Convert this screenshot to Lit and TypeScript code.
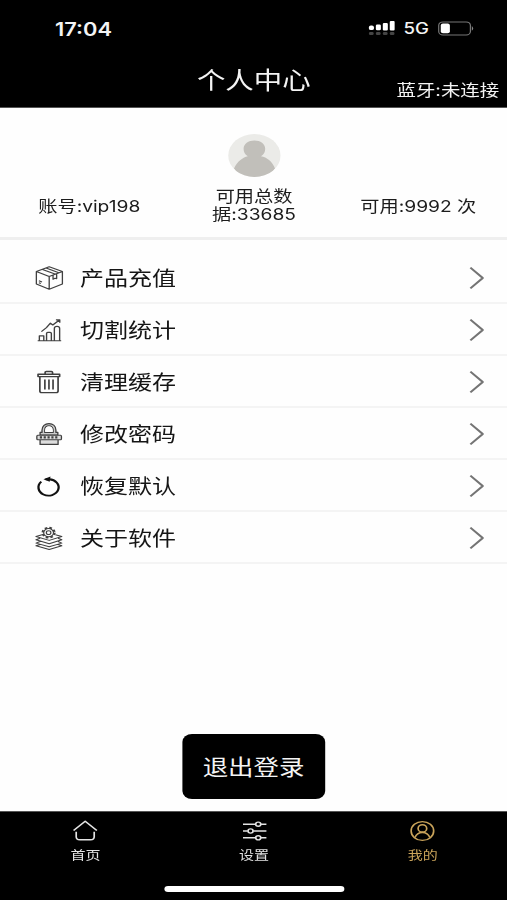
import { LitElement, html, css, svg } from "lit";
import { customElement, property } from "lit/decorators.js";

const icons: Record<string, unknown> = {
  box: svg`<path stroke-width="1.1" d="M12 .8 23 5.6V18L12 23.2 1.3 18V5.6ZM1.3 5.6 12 10.6 23 5.6M12 10.6V23.2M6.4 3.4 17.4 8.2M9.4 2 20 6.8M15.2 9.2V13.2L16.8 12.2 18.2 12.6V8M3.4 14.8l2.6 1.1M3.4 16.8l1.6.7"/>`,
  chart: svg`<path stroke-width="1.15" d="M2.4 22.7H22M3.8 22.5v-4.7h3.7v4.7M9.8 22.5V15.4q0-1 1-1h2q1 0 1 1v7.1M16.3 22.5V10.4q0-2 2.2-2t2.2 2v12.1M5.5 13.6 9.7 9.6 13 5.2 15 7 20.5 2M17.6 1.8h3.2v3"/>`,
  trash: svg`<path stroke-width="1.4" d="M2.7 4.3H20.7V6.6H2.7ZM8.6 4V2.4q0-.9 1-.9h4.2q1 0 1 .9V4M4.2 6.8V21q0 1.6 1.6 1.6H17.8q1.6 0 1.6-1.6V6.8M8.4 9.6v10M11.8 9.6v10M15.2 9.6v10"/>`,
  lock: svg`<path stroke-width="1.1" fill="#ccc" d="M4.4 13V10.4H6V8.2C6 4 8.5 1.6 11.8 1.6S17.6 4 17.6 8.2v2.2h1.6V13ZM8.3 10.4h7V8.2c0-2.8-1.4-4.3-3.5-4.3S8.3 5.4 8.3 8.2Z"/><path fill="#fff" stroke="none" d="M8.6 10H15V8.2c0-2.6-1.3-3.9-3.2-3.9S8.6 5.6 8.6 8.2Z"/><path fill="#ddd" stroke-width="1.1" d="M4.4 17.8v4.6H19.4v-4.6M2.4 13.2H21.5q.7 0 .7 1.2v2q0 1.3-.7 1.3H2.4q-.7 0-.7-1.3v-2q0-1.2.7-1.2Z"/><path stroke-width="2.2" stroke-dasharray="1.8 1.4" d="M4.2 15.4H20"/>`,
  reset: svg`<path stroke="#111" stroke-width="1.9" d="M5.4 7.7A8.4 8.2 0 1 0 12 5.2H9"/><path fill="#111" stroke="none" d="M7.2 5.3 13.1 2.6 12.4 7.8Z"/>`,
  about: svg`<path d="M6 8.8 1 10.5 12 14.4 22.5 10.5 17.2 8.8M4.4 12.2 1 13.8 12 17.8 22.5 13.8 19.4 12.2M4.4 15.5 1 17.1 12 20.8 22.5 17.1 19.4 15.5M4.4 18.5 1 19.8 12 23.5 22.5 19.8 19.4 18.5"/><circle cx="11.5" cy="6.7" r="4.1"/><circle cx="11.5" cy="6.7" r="1.9"/><circle cx="11.5" cy="6.7" r="5" stroke-width="1.8" stroke-dasharray="2.2 1.73"/>`,
  home: svg`<path d="m2.3 11.6 9.7-9.4 9.7 9.4M4.5 12.8v5q0 3 3 3h9q3 0 3-3v-5"/>`,
  sliders: svg`<path d="M2.5 5.2h10.4M17.5 5.2H22M2.5 12h4M11.2 12H22M2.5 18.8h10.4M17.5 18.8H22"/><circle cx="15.2" cy="5.2" r="2.1"/><circle cx="8.8" cy="12" r="2.1"/><circle cx="15.2" cy="18.8" r="2.1"/>`,
  user: svg`<circle cx="12" cy="12" r="9.4"/><circle cx="12" cy="9.4" r="3.6"/><path d="M5.8 18.6C6.8 15.4 9 13.5 12 13.5s5.2 1.9 6.2 5.1"/>`,
  chevron: svg`<path d="m7 1.7 10.3 10.3L7 22.3"/>`,
};

@customElement("line-icon")
class LineIcon extends LitElement {
  @property() name = "";
  static styles = css`
    :host { display: block; width: 24px; height: 24px; flex: none; }
    svg {
      display: block; width: 100%; height: 100%; overflow: visible; fill: none;
      stroke: currentColor; stroke-width: var(--line, 1);
      stroke-linejoin: round;
    }
  `;
  render() {
    return html`<svg viewBox="0 0 24 24">${icons[this.name]}</svg>`;
  }
}

@customElement("app-root")
class AppRoot extends LitElement {
  static styles = css`
    :host {
      display: block; width: 507px; height: 900px; overflow: hidden; background: #fefefe;
      font-family: Inter, "Noto Sans CJK SC", sans-serif; color: #1c1c1c;
    }
    * { box-sizing: border-box; }
    /* The whole screen is 20% wider than its natural proportions. */
    .screen {
      width: 422.5px; height: 900px; display: flex; flex-direction: column;
      transform: scaleX(1.2); transform-origin: 0 0;
    }
    .top { height: 108px; background: #000; color: #f4f4f4; border-bottom: 1px solid #555; flex: none; }
    .status { height: 57px; display: flex; align-items: center; padding: 0 28px 0 45.8px; }
    .time { font-size: 18.2px; font-weight: 600; flex: 1; }
    .signal { width: 22px; height: 15px; margin-right: 7px; }
    .net { font-size: 15.5px; font-weight: 500; margin-right: 7px; }
    .battery { width: 30px; height: 15px; }
    .titles { height: 48px; display: grid; grid-template-columns: 1fr auto 1fr; align-items: center; padding: 0 6.5px 0 7px; }
    .title { grid-column: 2; font-size: 23.7px; font-weight: 400; line-height: 30px; margin: 0; }
    .bt { font-size: 16.2px; line-height: 20px; text-align: right; padding-top: 18px; font-feature-settings: "calt" 0; }
    .account {
      height: 132px; display: grid; grid-template-columns: 1fr 1fr 1fr; flex: none; font-feature-settings: "calt" 0;
      border-bottom: 3px solid #efefef; font-size: 16px; line-height: 18.5px; text-align: center;
    }
    .side { padding-top: 89px; white-space: nowrap; }
    .left { padding-left: 8px; }
    .right { padding-right: 7px; }
    .mid { display: flex; flex-direction: column; align-items: center; padding: 26px 0 0 1px; }
    .avatar { width: 44px; height: 43px; margin-bottom: 9.5px; display: block; }
    .list { padding-top: 12px; flex: 1; }
    .row {
      height: 52px; display: flex; align-items: center; padding: 2px 12.8px 0 28.9px;
      border-bottom: 2px solid #f4f4f4; color: #404040;
    }
    .label { flex: 1; margin: -1px 0 1px 13.7px; font-size: 20px; color: #151515; }
    .go { --line: 1.8; color: #747474; width: 26px; }
    .exit {
      width: 119.5px; height: 65px; border-radius: 8px; border: 0; background: #000; color: #f4f4f4;
      font: inherit; font-size: 21.2px; align-self: center; margin-bottom: 12px; flex: none; padding: 0 0 2px;
    }
    .bottom { height: 89px; background: #000; border-top: 1px solid #555; flex: none; }
    .tabs { display: grid; grid-template-columns: 1fr 1fr 1fr; height: 74px; padding: 7px 0 0 1px; }
    .tab { display: flex; flex-direction: column; align-items: center; font-size: 12.5px; line-height: 18px; gap: 4px; color: #e4e4e4; }
    .tab line-icon { --line: 1.4; }
    .tabs .active { color: #c9a35a; }
    .indicator { width: 150.5px; height: 6px; border-radius: 3px; background: #fff; margin: 0 0 0 136.6px; }
  `;

  private rows = [
    ["box", "产品充值"],
    ["chart", "切割统计"],
    ["trash", "清理缓存"],
    ["lock", "修改密码"],
    ["reset", "恢复默认"],
    ["about", "关于软件"],
  ];

  private tabs = [
    ["home", "首页"],
    ["sliders", "设置"],
    ["user", "我的"],
  ];

  render() {
    return html`<div class="screen">
      <header class="top">
        <div class="status">
          <span class="time">17:04</span>
          <svg class="signal" viewBox="0 0 22 15">
            <g fill="#fff">
              <rect x="0.4" y="4.6" width="4.2" height="4.4" rx="1.6" /><rect x="6.2" y="3.6" width="4.2" height="5.6" rx="1.2" />
              <rect x="12" y="2" width="4.2" height="7.4" rx="1" /><rect x="17.8" y="0" width="4.2" height="9.4" rx="1" />
            </g>
            <g fill="#444">
              <rect x="0.4" y="11" width="4" height="3" rx="1.2" /><rect x="6.2" y="11" width="4" height="3" rx="1.2" />
              <rect x="12" y="11" width="4" height="3" rx="1.2" /><rect x="17.8" y="11" width="4" height="3" rx="1.2" />
            </g>
          </svg>
          <span class="net">5G</span>
          <svg class="battery" viewBox="0 0 30 15">
            <rect x=".6" y=".9" width="26.4" height="13" rx="3.5" fill="none" stroke="#777" />
            <rect x="2.3" y="2.6" width="7.6" height="9.6" rx="1.8" fill="#fff" />
            <path d="M28.2 5q2.2 2.4 0 4.8z" fill="#888" />
          </svg>
        </div>
        <div class="titles">
          <h1 class="title">个人中心</h1>
          <span class="bt">蓝牙:未连接</span>
        </div>
      </header>
      <section class="account">
        <div class="side left">账号:vip198</div>
        <div class="mid">
          <svg class="avatar" viewBox="0 0 44 43">
            <clipPath id="disc"><ellipse cx="22" cy="21.5" rx="21.8" ry="21.4" /></clipPath>
            <g clip-path="url(#disc)">
              <rect width="44" height="43" fill="#ebebe8" />
              <path d="M5 34.5C8 27 12.5 23.5 16.5 22.3 14 20.5 13 18 13 14.8 13 10 17 6.5 22 6.5s9 3.5 9 8.3c0 3.2-1 5.7-3.5 7.5 5 1.2 9 4.7 11.7 12.2L34 43H10Z" fill="#c1bfba" />
            </g>
          </svg>
          <div>可用总数<br />据:33685</div>
        </div>
        <div class="side right">可用:9992 次</div>
      </section>
      <main class="list">
        ${this.rows.map(
          ([icon, label]) => html`<div class="row">
            <line-icon name=${icon}></line-icon><span class="label">${label}</span><line-icon class="go" name="chevron"></line-icon>
          </div>`
        )}
      </main>
      <button class="exit">退出登录</button>
      <footer class="bottom">
        <nav class="tabs">
          ${this.tabs.map(
            ([icon, label]) => html`<div class="tab ${icon === "user" ? "active" : ""}">
              <line-icon name=${icon}></line-icon><span>${label}</span>
            </div>`
          )}
        </nav>
        <div class="indicator"></div>
      </footer>
    </div>`;
  }
}
